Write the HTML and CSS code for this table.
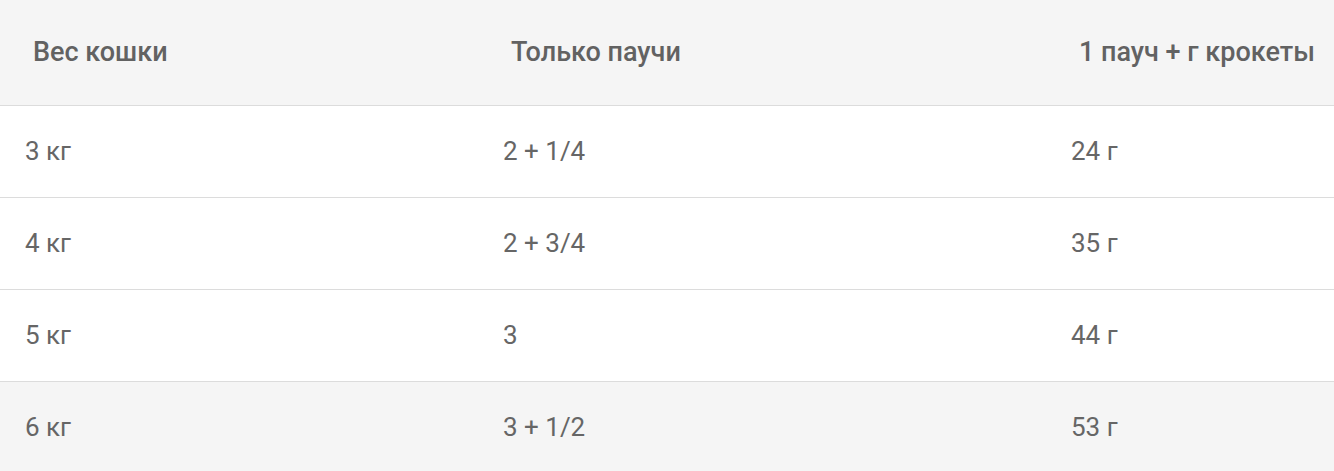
FILE: index.html
```html
<!DOCTYPE html>
<html lang="ru">
<head>
<meta charset="utf-8">
<link rel="stylesheet" href="styles.css">
</head>
<body>
<table class="feed">
  <thead>
    <tr class="head">
      <th class="c1">Вес кошки</th>
      <th class="c2">Только паучи</th>
      <th class="c3">1 пауч + г крокеты</th>
    </tr>
  </thead>
  <tbody>
    <tr><td>3 кг</td><td>2 + 1/4</td><td>24 г</td></tr>
    <tr><td>4 кг</td><td>2 + 3/4</td><td>35 г</td></tr>
    <tr><td>5 кг</td><td>3</td><td>44 г</td></tr>
    <tr class="alt"><td>6 кг</td><td>3 + 1/2</td><td>53 г</td></tr>
  </tbody>
</table>
</body>
</html>
```

FILE: styles.css
```css
html, body {
  margin: 0;
  padding: 0;
  background: #ffffff;
}
.feed {
  width: 1334px;
  border-collapse: collapse;
  table-layout: fixed;
  font-family: "Roboto", "Liberation Sans", sans-serif;
  color: #666666;
}
.feed th, .feed td {
  box-sizing: border-box;
}
.feed .c1 { width: 478px; }
.feed .c2 { width: 568px; }
.head {
  background: #f5f5f5;
  height: 105px;
  border-bottom: 1px solid #dcdcdc;
}
.head th {
  text-align: left;
  font-weight: 500;
  font-size: 27px;
  padding: 0 0 0 33px;
  color: #626262;
  white-space: nowrap;
}
tbody tr {
  height: 92px;
  border-bottom: 1px solid #dcdcdc;
}
tbody tr:last-child { border-bottom: none; }
tbody td {
  font-size: 26px;
  padding: 0 0 0 25px;
  font-weight: 400;
}
tbody tr.alt { background: #f5f5f5; }
```
